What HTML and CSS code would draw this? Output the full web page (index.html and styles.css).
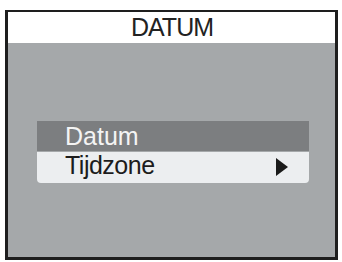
FILE: index.html
```html
<!DOCTYPE html>
<html>
<head>
<meta charset="utf-8">
<link rel="stylesheet" href="styles.css">
</head>
<body>
<div class="frame">
  <div class="header">DATUM</div>
  <div class="panel">
    <div class="menu">
      <div class="item selected">Datum</div>
      <div class="item current">
        <span>Tijdzone</span>
        <svg class="arrow" width="12" height="18" viewBox="0 0 12 18"><polygon points="0,0 12,9 0,18" fill="#1a1a1a"/></svg>
      </div>
    </div>
  </div>
</div>
</body>
</html>
```
FILE: styles.css
```css
html, body {
  margin: 0;
  padding: 0;
  background: #ffffff;
}
body {
  width: 342px;
  height: 262px;
  overflow: hidden;
  font-family: "Liberation Sans", Arial, sans-serif;
}
.frame {
  margin: 10px 0 0 5px;
  width: 327px;
  height: 245px;
  border-style: solid;
  border-color: #1e1e1e;
  border-width: 2px 3px 3px 3px;
  display: flex;
  flex-direction: column;
}
.header {
  height: 31px;
  line-height: 31px;
  background: #ffffff;
  color: #222222;
  text-align: center;
  font-size: 25px;
  letter-spacing: -1px;
  padding-left: 1px;
}
.panel {
  flex: 1;
  background: #a5a8aa;
  padding: 78px 26px 0 29px;
}
.menu {
  display: flex;
  flex-direction: column;
}
.item {
  font-size: 25px;
  padding-left: 28px;
}
.selected {
  height: 30px;
  line-height: 30px;
  background: #7c7e80;
  color: #f4f4f4;
  margin-bottom: 1px;
}
.current {
  height: 31px;
  line-height: 26px;
  background: #eceef0;
  color: #1c1c1c;
  border-radius: 0 0 4px 4px;
  display: flex;
  align-items: flex-start;
  justify-content: space-between;
  padding-right: 21px;
  letter-spacing: -0.5px;
}
.arrow {
  margin-top: 6px;
}
```
